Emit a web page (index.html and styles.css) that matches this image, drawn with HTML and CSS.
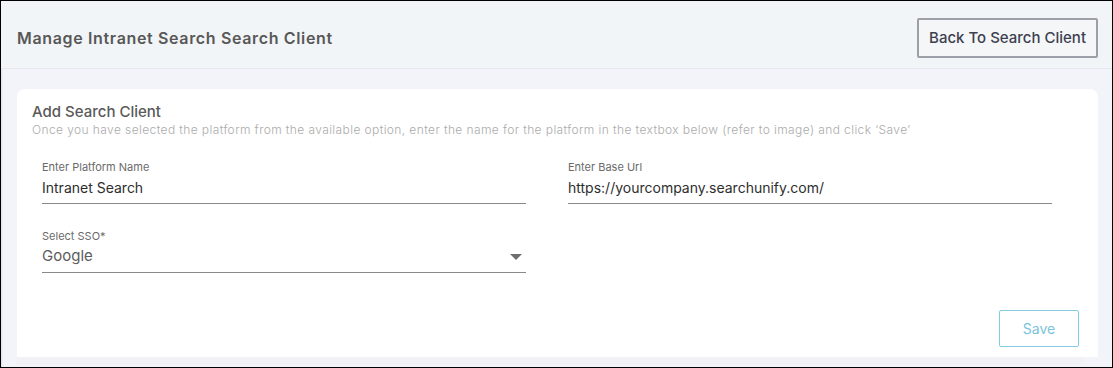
FILE: index.html
```html
<!DOCTYPE html>
<html lang="en">
  <head>
    <meta charset="utf-8" />
    <title>Manage Intranet Search Search Client</title>
    <link rel="stylesheet" href="styles.css">
  </head>
  <body>
    <div class="frame">
      <div class="page-header">
        <h1 class="page-title">Manage Intranet Search Search Client</h1>
        <button class="btn-back">Back To Search Client</button>
      </div>

      <div class="page-body">
        <form class="client-card">
          <h2 class="card-title">Add Search Client</h2>
          <p class="card-hint">Once you have selected the platform from the available option, enter the name for the platform in the textbox below (refer to image) and click ‘Save’</p>

          <div class="field-grid">
            <label class="field">
              <span class="field-label">Enter Platform Name</span>
              <span class="field-value">Intranet Search</span>
            </label>
            <label class="field">
              <span class="field-label">Enter Base Url</span>
              <span class="field-value">https://yourcompany.searchunify.com/</span>
            </label>
            <label class="field">
              <span class="field-label">Select SSO*</span>
              <span class="field-value field-select">Google
                <svg class="caret" width="12" height="6" viewBox="0 0 12 6"><path d="M0 0h12L6 6z" fill="#6f6f6f"/></svg>
              </span>
            </label>
          </div>

          <div class="card-actions">
            <button class="btn-save">Save</button>
          </div>
        </form>
        <div class="card-tail"></div>
      </div>
    </div>
  </body>
</html>
```

FILE: styles.css
```css
html, body {
  margin: 0;
  padding: 0;
}

.frame {
  box-sizing: border-box;
  width: 1113px;
  height: 368px;
  border: 1px solid #000;
  background: #f3f3fa;
  font-family: "Inter", "Open Sans", sans-serif;
  overflow: hidden;
  box-shadow: inset 2px 0 2px -1px #dcdce6;
}

.page-header {
  display: flex;
  align-items: center;
  justify-content: space-between;
  box-sizing: border-box;
  height: 68px;
  padding: 6px 14px 0 16px;
  background: #f2f5f7;
  border-bottom: 1px solid #e3e7ee;
}

.page-title {
  margin: 0;
  font-size: 16px;
  font-weight: 600;
  color: #585858;
  letter-spacing: 0.65px;
}

.btn-back {
  box-sizing: border-box;
  height: 40px;
  padding: 0 10px;
  border: 2px solid #9c9ea8;
  border-radius: 2px;
  background: #f4f6f8;
  font-family: inherit;
  font-size: 15px;
  font-weight: 500;
  color: #3e3f4f;
  cursor: pointer;
}

.page-body {
  padding: 20px 14px 0 16px;
}

.client-card {
  display: block;
  box-sizing: border-box;
  height: 268px;
  padding: 14px 19px 0 15px;
  background: #fff;
  border-radius: 8px 8px 0 0;
}

.card-title {
  margin: 0;
  font-size: 15px;
  font-weight: 500;
  color: #595959;
  line-height: 18px;
}

.card-hint {
  margin: 1px 0 0;
  font-size: 12px;
  font-weight: 300;
  color: #ababab;
  line-height: 16px;
  letter-spacing: 0.4px;
}

.field-grid {
  display: grid;
  grid-template-columns: 484px 484px;
  column-gap: 42px;
  row-gap: 25px;
  padding: 22px 10px 0;
}

.field {
  display: flex;
  flex-direction: column;
  border-bottom: 1px solid #8a8a8a;
}

.field-label {
  font-size: 11px;
  color: #6a6a6a;
  line-height: 14px;
}

.field-value {
  display: flex;
  align-items: center;
  justify-content: space-between;
  box-sizing: border-box;
  height: 29px;
  padding-bottom: 3px;
  font-size: 14px;
  color: #2e2e2e;
}

.field-select {
  padding-bottom: 4px;
  font-size: 15px;
  color: #5b5b5b;
}

.caret {
  margin-right: 4px;
  margin-top: 3px;
}

.card-actions {
  display: flex;
  justify-content: flex-end;
  margin-top: 37px;
}

.btn-save {
  box-sizing: border-box;
  width: 80px;
  height: 37px;
  border: 1px solid #84cde0;
  border-radius: 2px;
  background: #fff;
  font-family: inherit;
  font-size: 14px;
  color: #7cc3dc;
  cursor: pointer;
}

.card-tail {
  height: 8px;
  margin-right: 15px;
  background: #f1f1f6;
}
```
